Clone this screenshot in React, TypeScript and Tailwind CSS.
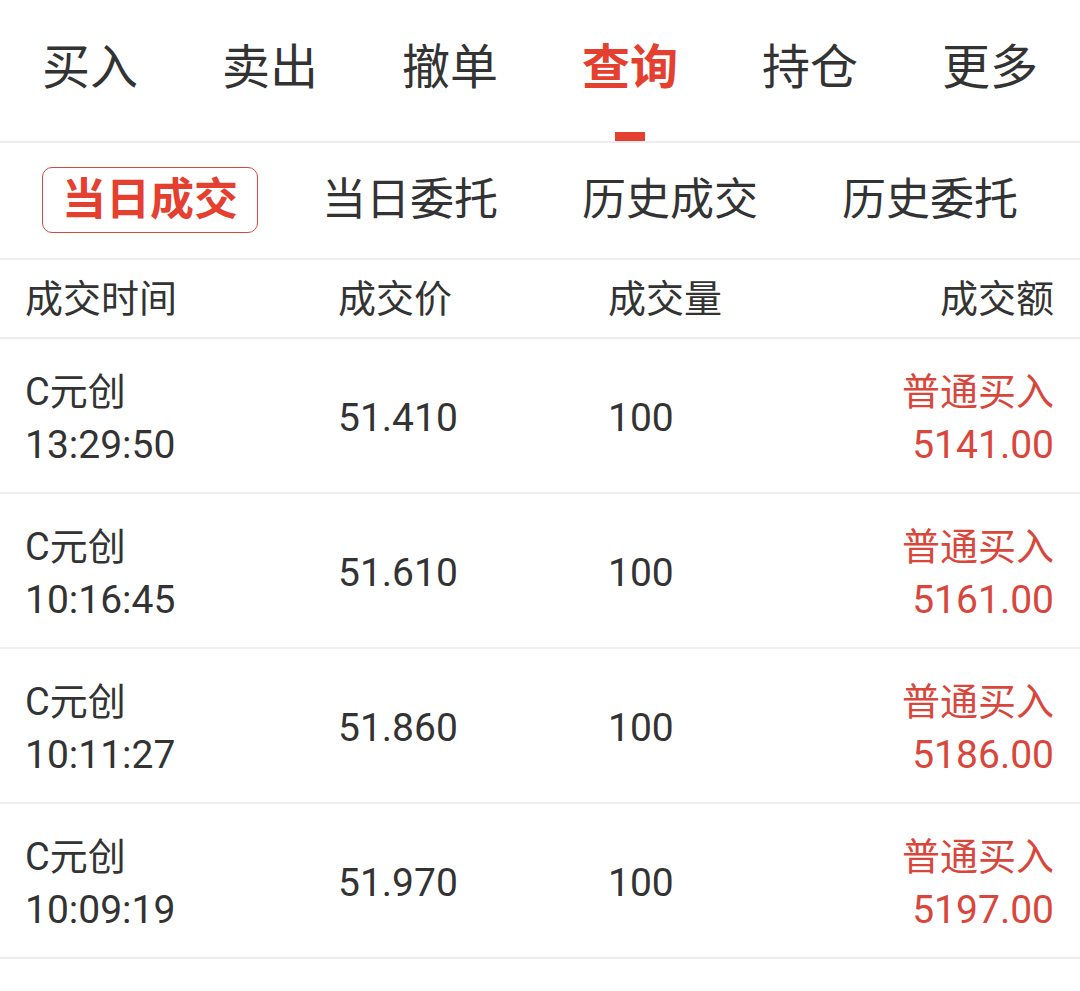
import React, { useState } from 'react';

const topTabs = ['买入', '卖出', '撤单', '查询', '持仓', '更多'];
const subTabs = ['当日成交', '当日委托', '历史成交', '历史委托'];

const trades = [
  { name: 'C元创', time: '13:29:50', price: '51.410', qty: '100', type: '普通买入', amount: '5141.00' },
  { name: 'C元创', time: '10:16:45', price: '51.610', qty: '100', type: '普通买入', amount: '5161.00' },
  { name: 'C元创', time: '10:11:27', price: '51.860', qty: '100', type: '普通买入', amount: '5186.00' },
  { name: 'C元创', time: '10:09:19', price: '51.970', qty: '100', type: '普通买入', amount: '5197.00' },
];

const App: React.FC = () => {
  const [activeTop, setActiveTop] = useState(3);
  const [activeSub, setActiveSub] = useState(0);

  return (
    <div className="min-h-screen w-full bg-white text-[#333333] font-['Roboto','Noto_Sans_CJK_SC',sans-serif]">
      {/* main tabs */}
      <div className="grid h-[143px] grid-cols-6 border-b-2 border-[#eeeeee]">
        {topTabs.map((tab, i) => (
          <button
            key={tab}
            onClick={() => setActiveTop(i)}
            className="flex flex-col items-center pt-[40px]"
          >
            <span
              className={`text-[48px] leading-[56px] ${
                i === activeTop ? 'font-bold text-[#e5402f]' : 'text-[#333333]'
              }`}
            >
              {tab}
            </span>
            {i === activeTop && <span className="mt-[36px] h-[9px] w-[30px] bg-[#e5402f]" />}
          </button>
        ))}
      </div>

      {/* sub tabs */}
      <div className="grid grid-cols-4 border-b-2 border-[#eeeeee] px-[20px] pt-[24px] pb-[25px]">
        {subTabs.map((tab, i) => (
          <div key={tab} className="flex justify-center">
            <button
              onClick={() => setActiveSub(i)}
              className={`h-[66px] rounded-[10px] border-[1.5px] px-[19px] text-[44px] leading-[62px] ${
                i === activeSub
                  ? 'border-[#d9483d] font-bold text-[#e5402f]'
                  : 'border-transparent text-[#333333]'
              }`}
            >
              {tab}
            </button>
          </div>
        ))}
      </div>

      {/* header */}
      <div className="grid h-[79px] grid-cols-[313px_270px_1fr_auto] items-center border-b-2 border-[#eeeeee] pl-[25px] pr-[26px] text-[38px] leading-[46px]">
        <span>成交时间</span>
        <span>成交价</span>
        <span>成交量</span>
        <span className="text-right">成交额</span>
      </div>

      {/* rows */}
      {trades.map((t, i) => (
        <div
          key={i}
          className="grid h-[155px] grid-cols-[313px_270px_1fr_auto] items-center border-b-2 border-[#eeeeee] pt-[6px] pl-[25px] pr-[26px] text-[38px] leading-[53px]"
        >
          <div className="flex flex-col">
            <span>{t.name}</span>
            <span className="text-[39px]">{t.time}</span>
          </div>
          <span className="text-[39px]">{t.price}</span>
          <span className="text-[39px]">{t.qty}</span>
          <div className="flex flex-col items-end text-[#d9463b]">
            <span>{t.type}</span>
            <span className="text-[39px]">{t.amount}</span>
          </div>
        </div>
      ))}
    </div>
  );
};

export default App;
